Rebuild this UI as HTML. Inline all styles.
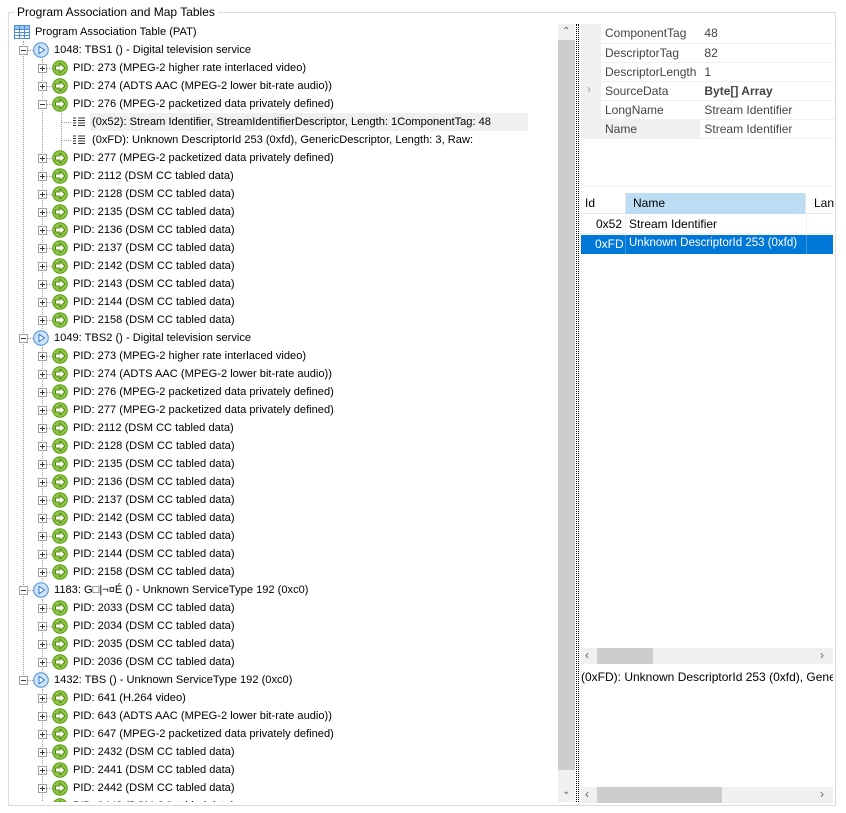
<!DOCTYPE html>
<html><head><meta charset="utf-8"><style>
*{margin:0;padding:0;box-sizing:border-box}
body{width:846px;height:813px;background:#fff;font-family:"Liberation Sans","DejaVu Sans",sans-serif;font-size:12px;color:#000;position:relative;overflow:hidden}
.abs{position:absolute}
.gb{left:8px;top:12px;width:828px;height:794px;border:1px solid #dcdcdc}
.gt{left:14px;top:5px;background:#fff;padding:0 3px;white-space:nowrap}
.tree{left:9px;top:23px;width:549px;height:779px;overflow:hidden;font-size:11.1px}
.r{position:absolute;height:18px;line-height:18px;white-space:nowrap;left:0;width:549px}
.t{position:absolute;top:0}
.ic{position:absolute;top:1px;width:16px;height:16px}
.ex{position:absolute;top:5px;width:9px;height:9px}
.vl{position:absolute;border-left:1px dotted #a0a0a0;width:0}
.hl{position:absolute;border-top:1px dotted #a0a0a0;height:0;top:9px}
.pg td{height:19px;padding:0 4px;color:#444;border-bottom:1px solid #f0f0f0}
</style></head><body>
<svg width="0" height="0" style="position:absolute">
<defs>
<symbol id="g" viewBox="0 0 16 16"><circle cx="8" cy="8" r="7.3" fill="#8cc63f" stroke="#5e9a1a"/><path d="M3.5 6h4.5V3.2L12.8 8 8 12.8V10H3.5z" fill="#f4fbe8" stroke="#3f6f10" stroke-width=".8" stroke-linejoin="round"/></symbol>
<symbol id="b" viewBox="0 0 16 16"><circle cx="8" cy="8" r="7.3" fill="#cfe3f7" stroke="#4a8fd6"/><path d="M6 4.3v7.4L11.5 8z" fill="#fff" stroke="#2f78c8" stroke-width="1"/></symbol>
<symbol id="p" viewBox="0 0 9 9"><rect x=".5" y=".5" width="8" height="8" fill="#fff" stroke="#a0a0a0"/><path d="M2 4.5h5M4.5 2v5" stroke="#333"/></symbol>
<symbol id="m" viewBox="0 0 9 9"><rect x=".5" y=".5" width="8" height="8" fill="#fff" stroke="#a0a0a0"/><path d="M2 4.5h5" stroke="#333"/></symbol>
<symbol id="d" viewBox="0 0 16 16"><path d="M2 4h3M2 6.5h3M2 9h3M2 11.5h3" stroke="#333"/><path d="M7 4h7M7 6.5h7M7 9h7M7 11.5h7" stroke="#333"/></symbol>
<symbol id="tb" viewBox="0 0 16 16"><rect x=".5" y="1.5" width="15" height="13" fill="#fff" stroke="#4a8fd6"/><rect x="1" y="2" width="14" height="3" fill="#9cc4ee"/><path d="M1 5.5h14M1 8.5h14M1 11.5h14M5.5 2v12M10.5 2v12" stroke="#4a8fd6"/></symbol>
</defs></svg>

<div class="abs gb"></div>
<div class="abs gt">Program Association and Map Tables</div>

<div class="abs tree">
<div class="vl" style="left:14px;top:18px;height:640px"></div>
<div class="vl" style="left:33px;top:36px;height:270px"></div>
<div class="vl" style="left:52px;top:90px;height:36px"></div>
<div class="vl" style="left:33px;top:324px;height:234px"></div>
<div class="vl" style="left:33px;top:576px;height:72px"></div>
<div class="vl" style="left:33px;top:666px;height:120px"></div>

<div class="r" style="top:0"><svg class="ic" style="left:5px"><use href="#tb"/></svg><span class="t" style="left:26px">Program Association Table (PAT)</span></div>

<div class="r" style="top:18px"><div class="hl" style="left:14px;width:10px"></div><svg class="ex" style="left:10px"><use href="#m"/></svg><svg class="ic" style="left:24px"><use href="#b"/></svg><span class="t" style="left:45px">1048: TBS1 () - Digital television service</span></div>
<div class="r" style="top:36px"><div class="hl" style="left:33px;width:10px"></div><svg class="ex" style="left:29px"><use href="#p"/></svg><svg class="ic" style="left:43px"><use href="#g"/></svg><span class="t" style="left:64px">PID: 273 (MPEG-2 higher rate interlaced video)</span></div>
<div class="r" style="top:54px"><div class="hl" style="left:33px;width:10px"></div><svg class="ex" style="left:29px"><use href="#p"/></svg><svg class="ic" style="left:43px"><use href="#g"/></svg><span class="t" style="left:64px">PID: 274 (ADTS AAC (MPEG-2 lower bit-rate audio))</span></div>
<div class="r" style="top:72px"><div class="hl" style="left:33px;width:10px"></div><svg class="ex" style="left:29px"><use href="#m"/></svg><svg class="ic" style="left:43px"><use href="#g"/></svg><span class="t" style="left:64px">PID: 276 (MPEG-2 packetized data privately defined)</span></div>
<div class="r" style="top:90px"><div class="hl" style="left:52px;width:10px"></div><svg class="ic" style="left:62px"><use href="#d"/></svg><span class="t" style="left:81px;background:#f0f0f0;padding:0 3px 0 2px;width:438px">(0x52): Stream Identifier, StreamIdentifierDescriptor, Length: 1ComponentTag: 48</span></div>
<div class="r" style="top:108px"><div class="hl" style="left:52px;width:10px"></div><svg class="ic" style="left:62px"><use href="#d"/></svg><span class="t" style="left:83px">(0xFD): Unknown DescriptorId 253 (0xfd), GenericDescriptor, Length: 3, Raw:</span></div>
<div class="r" style="top:126px"><div class="hl" style="left:33px;width:10px"></div><svg class="ex" style="left:29px"><use href="#p"/></svg><svg class="ic" style="left:43px"><use href="#g"/></svg><span class="t" style="left:64px">PID: 277 (MPEG-2 packetized data privately defined)</span></div>
<div class="r" style="top:144px"><div class="hl" style="left:33px;width:10px"></div><svg class="ex" style="left:29px"><use href="#p"/></svg><svg class="ic" style="left:43px"><use href="#g"/></svg><span class="t" style="left:64px">PID: 2112 (DSM CC tabled data)</span></div>
<div class="r" style="top:162px"><div class="hl" style="left:33px;width:10px"></div><svg class="ex" style="left:29px"><use href="#p"/></svg><svg class="ic" style="left:43px"><use href="#g"/></svg><span class="t" style="left:64px">PID: 2128 (DSM CC tabled data)</span></div>
<div class="r" style="top:180px"><div class="hl" style="left:33px;width:10px"></div><svg class="ex" style="left:29px"><use href="#p"/></svg><svg class="ic" style="left:43px"><use href="#g"/></svg><span class="t" style="left:64px">PID: 2135 (DSM CC tabled data)</span></div>
<div class="r" style="top:198px"><div class="hl" style="left:33px;width:10px"></div><svg class="ex" style="left:29px"><use href="#p"/></svg><svg class="ic" style="left:43px"><use href="#g"/></svg><span class="t" style="left:64px">PID: 2136 (DSM CC tabled data)</span></div>
<div class="r" style="top:216px"><div class="hl" style="left:33px;width:10px"></div><svg class="ex" style="left:29px"><use href="#p"/></svg><svg class="ic" style="left:43px"><use href="#g"/></svg><span class="t" style="left:64px">PID: 2137 (DSM CC tabled data)</span></div>
<div class="r" style="top:234px"><div class="hl" style="left:33px;width:10px"></div><svg class="ex" style="left:29px"><use href="#p"/></svg><svg class="ic" style="left:43px"><use href="#g"/></svg><span class="t" style="left:64px">PID: 2142 (DSM CC tabled data)</span></div>
<div class="r" style="top:252px"><div class="hl" style="left:33px;width:10px"></div><svg class="ex" style="left:29px"><use href="#p"/></svg><svg class="ic" style="left:43px"><use href="#g"/></svg><span class="t" style="left:64px">PID: 2143 (DSM CC tabled data)</span></div>
<div class="r" style="top:270px"><div class="hl" style="left:33px;width:10px"></div><svg class="ex" style="left:29px"><use href="#p"/></svg><svg class="ic" style="left:43px"><use href="#g"/></svg><span class="t" style="left:64px">PID: 2144 (DSM CC tabled data)</span></div>
<div class="r" style="top:288px"><div class="hl" style="left:33px;width:10px"></div><svg class="ex" style="left:29px"><use href="#p"/></svg><svg class="ic" style="left:43px"><use href="#g"/></svg><span class="t" style="left:64px">PID: 2158 (DSM CC tabled data)</span></div>

<div class="r" style="top:306px"><div class="hl" style="left:14px;width:10px"></div><svg class="ex" style="left:10px"><use href="#m"/></svg><svg class="ic" style="left:24px"><use href="#b"/></svg><span class="t" style="left:45px">1049: TBS2 () - Digital television service</span></div>
<div class="r" style="top:324px"><div class="hl" style="left:33px;width:10px"></div><svg class="ex" style="left:29px"><use href="#p"/></svg><svg class="ic" style="left:43px"><use href="#g"/></svg><span class="t" style="left:64px">PID: 273 (MPEG-2 higher rate interlaced video)</span></div>
<div class="r" style="top:342px"><div class="hl" style="left:33px;width:10px"></div><svg class="ex" style="left:29px"><use href="#p"/></svg><svg class="ic" style="left:43px"><use href="#g"/></svg><span class="t" style="left:64px">PID: 274 (ADTS AAC (MPEG-2 lower bit-rate audio))</span></div>
<div class="r" style="top:360px"><div class="hl" style="left:33px;width:10px"></div><svg class="ex" style="left:29px"><use href="#p"/></svg><svg class="ic" style="left:43px"><use href="#g"/></svg><span class="t" style="left:64px">PID: 276 (MPEG-2 packetized data privately defined)</span></div>
<div class="r" style="top:378px"><div class="hl" style="left:33px;width:10px"></div><svg class="ex" style="left:29px"><use href="#p"/></svg><svg class="ic" style="left:43px"><use href="#g"/></svg><span class="t" style="left:64px">PID: 277 (MPEG-2 packetized data privately defined)</span></div>
<div class="r" style="top:396px"><div class="hl" style="left:33px;width:10px"></div><svg class="ex" style="left:29px"><use href="#p"/></svg><svg class="ic" style="left:43px"><use href="#g"/></svg><span class="t" style="left:64px">PID: 2112 (DSM CC tabled data)</span></div>
<div class="r" style="top:414px"><div class="hl" style="left:33px;width:10px"></div><svg class="ex" style="left:29px"><use href="#p"/></svg><svg class="ic" style="left:43px"><use href="#g"/></svg><span class="t" style="left:64px">PID: 2128 (DSM CC tabled data)</span></div>
<div class="r" style="top:432px"><div class="hl" style="left:33px;width:10px"></div><svg class="ex" style="left:29px"><use href="#p"/></svg><svg class="ic" style="left:43px"><use href="#g"/></svg><span class="t" style="left:64px">PID: 2135 (DSM CC tabled data)</span></div>
<div class="r" style="top:450px"><div class="hl" style="left:33px;width:10px"></div><svg class="ex" style="left:29px"><use href="#p"/></svg><svg class="ic" style="left:43px"><use href="#g"/></svg><span class="t" style="left:64px">PID: 2136 (DSM CC tabled data)</span></div>
<div class="r" style="top:468px"><div class="hl" style="left:33px;width:10px"></div><svg class="ex" style="left:29px"><use href="#p"/></svg><svg class="ic" style="left:43px"><use href="#g"/></svg><span class="t" style="left:64px">PID: 2137 (DSM CC tabled data)</span></div>
<div class="r" style="top:486px"><div class="hl" style="left:33px;width:10px"></div><svg class="ex" style="left:29px"><use href="#p"/></svg><svg class="ic" style="left:43px"><use href="#g"/></svg><span class="t" style="left:64px">PID: 2142 (DSM CC tabled data)</span></div>
<div class="r" style="top:504px"><div class="hl" style="left:33px;width:10px"></div><svg class="ex" style="left:29px"><use href="#p"/></svg><svg class="ic" style="left:43px"><use href="#g"/></svg><span class="t" style="left:64px">PID: 2143 (DSM CC tabled data)</span></div>
<div class="r" style="top:522px"><div class="hl" style="left:33px;width:10px"></div><svg class="ex" style="left:29px"><use href="#p"/></svg><svg class="ic" style="left:43px"><use href="#g"/></svg><span class="t" style="left:64px">PID: 2144 (DSM CC tabled data)</span></div>
<div class="r" style="top:540px"><div class="hl" style="left:33px;width:10px"></div><svg class="ex" style="left:29px"><use href="#p"/></svg><svg class="ic" style="left:43px"><use href="#g"/></svg><span class="t" style="left:64px">PID: 2158 (DSM CC tabled data)</span></div>

<div class="r" style="top:558px"><div class="hl" style="left:14px;width:10px"></div><svg class="ex" style="left:10px"><use href="#m"/></svg><svg class="ic" style="left:24px"><use href="#b"/></svg><span class="t" style="left:45px">1183: G&#9633;|¬¤É () - Unknown ServiceType 192 (0xc0)</span></div>
<div class="r" style="top:576px"><div class="hl" style="left:33px;width:10px"></div><svg class="ex" style="left:29px"><use href="#p"/></svg><svg class="ic" style="left:43px"><use href="#g"/></svg><span class="t" style="left:64px">PID: 2033 (DSM CC tabled data)</span></div>
<div class="r" style="top:594px"><div class="hl" style="left:33px;width:10px"></div><svg class="ex" style="left:29px"><use href="#p"/></svg><svg class="ic" style="left:43px"><use href="#g"/></svg><span class="t" style="left:64px">PID: 2034 (DSM CC tabled data)</span></div>
<div class="r" style="top:612px"><div class="hl" style="left:33px;width:10px"></div><svg class="ex" style="left:29px"><use href="#p"/></svg><svg class="ic" style="left:43px"><use href="#g"/></svg><span class="t" style="left:64px">PID: 2035 (DSM CC tabled data)</span></div>
<div class="r" style="top:630px"><div class="hl" style="left:33px;width:10px"></div><svg class="ex" style="left:29px"><use href="#p"/></svg><svg class="ic" style="left:43px"><use href="#g"/></svg><span class="t" style="left:64px">PID: 2036 (DSM CC tabled data)</span></div>

<div class="r" style="top:648px"><div class="hl" style="left:14px;width:10px"></div><svg class="ex" style="left:10px"><use href="#m"/></svg><svg class="ic" style="left:24px"><use href="#b"/></svg><span class="t" style="left:45px">1432: TBS () - Unknown ServiceType 192 (0xc0)</span></div>
<div class="r" style="top:666px"><div class="hl" style="left:33px;width:10px"></div><svg class="ex" style="left:29px"><use href="#p"/></svg><svg class="ic" style="left:43px"><use href="#g"/></svg><span class="t" style="left:64px">PID: 641 (H.264 video)</span></div>
<div class="r" style="top:684px"><div class="hl" style="left:33px;width:10px"></div><svg class="ex" style="left:29px"><use href="#p"/></svg><svg class="ic" style="left:43px"><use href="#g"/></svg><span class="t" style="left:64px">PID: 643 (ADTS AAC (MPEG-2 lower bit-rate audio))</span></div>
<div class="r" style="top:702px"><div class="hl" style="left:33px;width:10px"></div><svg class="ex" style="left:29px"><use href="#p"/></svg><svg class="ic" style="left:43px"><use href="#g"/></svg><span class="t" style="left:64px">PID: 647 (MPEG-2 packetized data privately defined)</span></div>
<div class="r" style="top:720px"><div class="hl" style="left:33px;width:10px"></div><svg class="ex" style="left:29px"><use href="#p"/></svg><svg class="ic" style="left:43px"><use href="#g"/></svg><span class="t" style="left:64px">PID: 2432 (DSM CC tabled data)</span></div>
<div class="r" style="top:738px"><div class="hl" style="left:33px;width:10px"></div><svg class="ex" style="left:29px"><use href="#p"/></svg><svg class="ic" style="left:43px"><use href="#g"/></svg><span class="t" style="left:64px">PID: 2441 (DSM CC tabled data)</span></div>
<div class="r" style="top:756px"><div class="hl" style="left:33px;width:10px"></div><svg class="ex" style="left:29px"><use href="#p"/></svg><svg class="ic" style="left:43px"><use href="#g"/></svg><span class="t" style="left:64px">PID: 2442 (DSM CC tabled data)</span></div>
<div class="r" style="top:774px"><div class="hl" style="left:33px;width:10px"></div><svg class="ex" style="left:29px"><use href="#p"/></svg><svg class="ic" style="left:43px"><use href="#g"/></svg><span class="t" style="left:64px">PID: 2443 (DSM CC tabled data)</span></div>
</div>

<div class="abs" style="left:558px;top:24px;width:17px;height:778px;background:#f0f0f0"></div>
<div class="abs" style="left:558px;top:40px;width:17px;height:730px;background:#cdcdcd"></div>
<div class="abs" style="left:562px;top:26px;font-size:10px;color:#606060">&#8963;</div>
<div class="abs" style="left:562px;top:786px;font-size:10px;color:#606060">&#8964;</div>
<div class="abs" style="left:576px;top:24px;width:3px;height:778px;border-left:1px dotted #000;border-right:1px dotted #000"></div>

<div class="abs" style="left:581px;top:24px;width:252px;height:115px;background:#f0f0f0"></div>
<table class="abs pg" style="left:601px;top:24px;border-collapse:collapse;background:#fff">
<tr><td style="width:97px;background:#fff">ComponentTag</td><td style="width:135px">48</td></tr>
<tr><td style="background:#fff">DescriptorTag</td><td>82</td></tr>
<tr><td style="background:#fff">DescriptorLength</td><td>1</td></tr>
<tr><td style="background:#fff">SourceData</td><td style="font-weight:bold">Byte[] Array</td></tr>
<tr><td style="background:#fff">LongName</td><td>Stream Identifier</td></tr>
<tr><td style="background:#f0f0f0">Name</td><td>Stream Identifier</td></tr>
</table>
<div class="abs" style="left:587px;top:82px;color:#999;font-size:12px">&#8250;</div>
<div class="abs" style="left:581px;top:186px;width:252px;height:1px;background:#f0f0f0"></div>

<div class="abs" style="left:581px;top:193px;width:252px;height:21px;border-bottom:1px solid #e5e5e5"></div>
<div class="abs" style="left:585px;top:196px">Id</div>
<div class="abs" style="left:625px;top:193px;width:181px;height:21px;background:#bcdcf4;border-left:1px solid #e5e5e5;border-right:1px solid #e5e5e5"></div>
<div class="abs" style="left:633px;top:196px">Name</div>
<div class="abs" style="left:814px;top:196px">Lan</div>
<div class="abs" style="left:581px;top:214px;width:252px;height:20px;border-bottom:1px solid #f0f0f0"></div>
<div class="abs" style="left:625px;top:214px;width:1px;height:40px;background:#f0f0f0"></div>
<div class="abs" style="left:806px;top:214px;width:1px;height:40px;background:#f0f0f0"></div>
<div class="abs" style="left:596px;top:217px">0x52</div>
<div class="abs" style="left:629px;top:217px">Stream Identifier</div>
<div class="abs" style="left:581px;top:235px;width:252px;height:19px;background:#0078d7"></div>
<div class="abs" style="left:625px;top:235px;width:1px;height:19px;background:#3f95e0"></div>
<div class="abs" style="left:806px;top:235px;width:1px;height:19px;background:#3f95e0"></div>
<div class="abs" style="left:595px;top:237px;color:#fff">0xFD</div>
<div class="abs" style="left:629px;top:237px;color:#fff;font-size:11.5px">Unknown DescriptorId 253 (0xfd)</div>

<div class="abs" style="left:581px;top:648px;width:252px;height:16px;background:#f0f0f0"></div>
<div class="abs" style="left:597px;top:648px;width:56px;height:16px;background:#cdcdcd"></div>
<div class="abs" style="left:585px;top:648px;color:#606060;font-size:12px">&#8249;</div>
<div class="abs" style="left:820px;top:648px;color:#606060;font-size:12px">&#8250;</div>
<div class="abs" style="left:581px;top:670px;white-space:nowrap;width:252px;overflow:hidden">(0xFD): Unknown DescriptorId 253 (0xfd), GenericDescriptor</div>
<div class="abs" style="left:581px;top:787px;width:252px;height:16px;background:#f0f0f0"></div>
<div class="abs" style="left:597px;top:787px;width:125px;height:16px;background:#cdcdcd"></div>
<div class="abs" style="left:585px;top:787px;color:#606060;font-size:12px">&#8249;</div>
<div class="abs" style="left:820px;top:787px;color:#606060;font-size:12px">&#8250;</div>
</body></html>
